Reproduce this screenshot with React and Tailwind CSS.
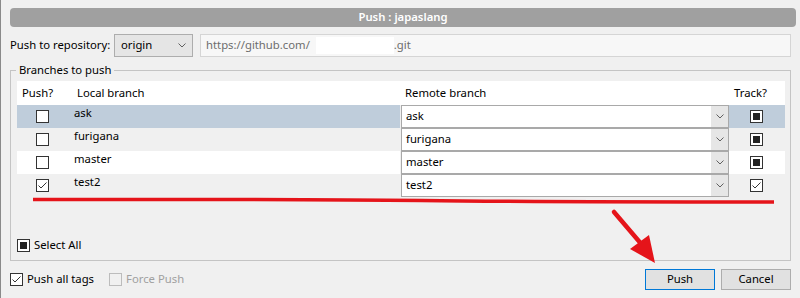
import React from "react";

const BRANCHES = [
  { name: "ask", push: false, track: "filled", bg: "bg-[#bfcddb]" },
  { name: "furigana", push: false, track: "filled", bg: "bg-[#f0f0f0]" },
  { name: "master", push: false, track: "filled", bg: "bg-white" },
  { name: "test2", push: true, track: "checked", bg: "bg-[#f0f0f0]" },
];

function Chevron() {
  return (
    <svg width="8" height="5" viewBox="0 0 8 5" className="text-[#606060]">
      <polyline points="0.5,0.5 4,4 7.5,0.5" fill="none" stroke="currentColor" strokeWidth="1" />
    </svg>
  );
}

// state: "off" | "checked" | "filled" | "disabled"
function Box({ state = "off" }) {
  const disabled = state === "disabled";
  return (
    <div
      className={`w-[13px] h-[13px] border flex items-center justify-center shrink-0 ${
        disabled ? "border-[#bcbcbc] bg-[#f0f0f0]" : "border-[#333] bg-white"
      }`}
    >
      {state === "filled" && <div className="w-[7px] h-[7px] bg-[#222]" />}
      {state === "checked" && (
        <svg width="11" height="11" viewBox="0 0 11 11">
          <polyline points="1.5,5.5 4,8 9.5,2.5" fill="none" stroke="#333" strokeWidth="1" />
        </svg>
      )}
    </div>
  );
}

export default function App() {
  return (
    <div className="relative w-[800px] h-[298px] overflow-hidden bg-[#f0f0f0] border-l border-[#8a8a8a] pl-[9px] pr-[4px] pt-[8px] flex flex-col whitespace-nowrap font-['Noto_Sans',sans-serif] text-[11.3px] text-black">
      {/* title */}
      <div className="h-[19px] rounded-[4px] bg-[#a0a0a0] flex items-center justify-center text-white font-semibold">
        Push : japaslang
      </div>

      {/* repository */}
      <div className="mt-[7px] mr-[5px] h-[23px] flex items-center">
        <span className="w-[104px]">Push to repository:</span>
        <div className="w-[79px] h-full border border-[#adadad] bg-[#e5e5e5] flex items-center justify-between pl-[6px] pr-[6px]">
          <span>origin</span>
          <Chevron />
        </div>
        <div className="ml-[7px] flex-1 h-full border border-[#d5d5d5] bg-[#f7f7f7] flex items-center pl-[5px] text-[#6d6d6d]">
          <span>https://github.com/</span>
          <span className="ml-[6px] w-[78px] h-[17px] bg-white" />
          <span>.git</span>
        </div>
      </div>

      {/* branches */}
      <fieldset className="mt-[5px] mr-[5px] h-[199px] border border-[#c4c4c4] pl-[6px] pr-[5px]">
        <legend className="-ml-[1px] px-[3px] leading-[16px]">Branches to push</legend>
        <div className="mt-[3px] grid grid-cols-[53px_330px_329px_56px]">
          <div className="h-[24px] bg-white flex items-center pl-[5px]">Push?</div>
          <div className="h-[24px] bg-white flex items-center pl-[7px]">Local branch</div>
          <div className="h-[24px] bg-white flex items-center pl-[5px]">Remote branch</div>
          <div className="h-[24px] bg-white flex items-center pl-[5px]">Track?</div>
          {BRANCHES.map((b) => (
            <React.Fragment key={b.name}>
              <div className={`h-[23px] ${b.bg} flex items-center pl-[19px]`}>
                <Box state={b.push ? "checked" : "off"} />
              </div>
              <div className={`h-[23px] ${b.bg} pl-[4px] leading-[15px]`}>{b.name}</div>
              <div className="h-[23px] pl-[1px]">
                <div className="h-full border border-[#a9a9a9] bg-white flex">
                  <span className="flex-1 flex items-center pl-[4px]">{b.name}</span>
                  <span className="w-[17px] bg-[#e6e6e6] flex items-center justify-center">
                    <Chevron />
                  </span>
                </div>
              </div>
              <div className={`h-[23px] ${b.bg} flex items-center justify-center pr-[2px]`}>
                <Box state={b.track} />
              </div>
            </React.Fragment>
          ))}
        </div>
        <div className="mt-[40px] flex items-center gap-[4px]">
          <Box state="filled" />
          <span>Select All</span>
        </div>
      </fieldset>

      {/* bottom */}
      <div className="mt-[8px] mr-[5px] h-[21px] flex items-center">
        <Box state="checked" />
        <span className="ml-[4px]">Push all tags</span>
        <div className="ml-[15px]">
          <Box state="disabled" />
        </div>
        <span className="ml-[4px] text-[#a0a0a0]">Force Push</span>
        <button className="ml-auto w-[70px] h-[21px] bg-[#e1e1e1] border border-[#0078d7]">Push</button>
        <button className="ml-[6px] w-[70px] h-[21px] bg-[#e1e1e1] border border-[#adadad]">Cancel</button>
      </div>

      {/* red annotation */}
      <svg className="absolute inset-0 pointer-events-none" width="800" height="298" viewBox="0 0 800 298">
        <path d="M32 199.5 Q300 199 420 200.5 T773 202" fill="none" stroke="#e5141a" strokeWidth="3.5" />
        <line x1="613" y1="212" x2="642" y2="246" stroke="#e5141a" strokeWidth="4.5" strokeLinecap="round" />
        <polygon points="629,249 648,235 654,263" fill="#e5141a" />
      </svg>
    </div>
  );
}
